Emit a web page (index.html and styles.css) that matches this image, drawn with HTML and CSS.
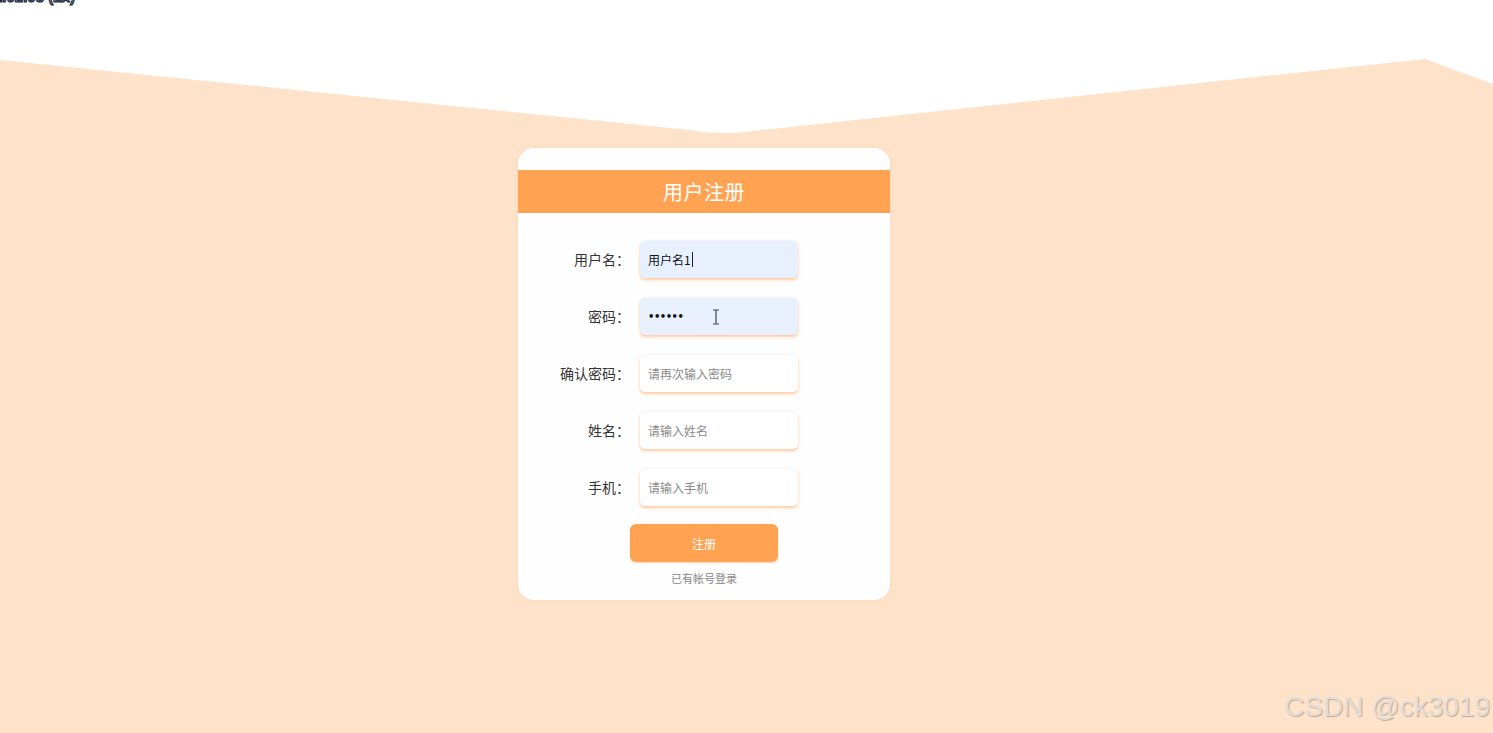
FILE: index.html
```html
<!DOCTYPE html>
<html lang="zh">
<head>
<meta charset="utf-8">
<title>用户注册</title>
<link rel="stylesheet" href="styles.css">
</head>
<body>
<svg class="bg" width="1493" height="733" viewBox="0 0 1493 733" aria-hidden="true">
  <path d="M0,60 L690,130 Q720,136 752,131 L1425,59 L1493,84 L1493,733 L0,733 Z" fill="#fee3ca"/>
</svg>
<span class="zoom-tag">1.02.03 (2x)</span>
<main class="page">
  <section class="card">
    <div class="card-top"></div>
    <h1 class="card-title">用户注册</h1>
    <form class="form">
      <div class="row">
        <label class="label">用户名：</label>
        <div class="field filled"><span class="value">用户名1</span><span class="caret"></span></div>
      </div>
      <div class="row">
        <label class="label">密码：</label>
        <div class="field filled"><span class="value dots">••••••</span>
          <svg class="ibeam" width="8" height="16" viewBox="0 0 8 16"><path d="M1,1 H7 M4,1 V15 M1,15 H7" stroke="#444" stroke-width="1.2" fill="none"/></svg>
        </div>
      </div>
      <div class="row">
        <label class="label">确认密码：</label>
        <div class="field"><span class="ph">请再次输入密码</span></div>
      </div>
      <div class="row">
        <label class="label">姓名：</label>
        <div class="field"><span class="ph">请输入姓名</span></div>
      </div>
      <div class="row">
        <label class="label">手机：</label>
        <div class="field"><span class="ph">请输入手机</span></div>
      </div>
      <div class="actions">
        <button type="button" class="btn">注册</button>
        <a class="login-link">已有帐号登录</a>
      </div>
    </form>
  </section>
</main>
<div class="watermark">CSDN @ck3019</div>
</body>
</html>
```

FILE: styles.css
```css
* { box-sizing: border-box; }
html, body { margin: 0; padding: 0; }
body {
  width: 1493px;
  height: 733px;
  overflow: hidden;
  background: #ffffff;
  font-family: "Noto Sans CJK SC", "Noto Sans", sans-serif;
  position: relative;
}
.bg { position: absolute; left: 0; top: 0; z-index: 0; }
.zoom-tag {
  position: absolute;
  left: -6px;
  top: -12px;
  font: bold 15px "Liberation Sans", sans-serif;
  color: #5b80d8;
  -webkit-text-stroke: 1px #222;
  z-index: 2;
}
.page {
  position: relative;
  z-index: 1;
  padding-top: 148px;
  padding-left: 518px;
}
.card {
  width: 372px;
  height: 452px;
  background: #fefefe;
  border-radius: 16px;
  overflow: hidden;
  box-shadow: 0 0 4px rgba(255, 200, 160, 0.4);
}
.card-top { height: 22px; }
.card-title {
  margin: 0;
  height: 43px;
  background: #ffa352;
  color: #fff;
  font-size: 20px;
  font-weight: 400;
  line-height: 43px;
  text-align: center;
  letter-spacing: 0.5px;
}
.form {
  display: flex;
  flex-direction: column;
  padding-top: 28px;
  gap: 21px;
}
.row {
  display: flex;
  align-items: center;
  height: 36px;
}
.label {
  width: 112px;
  text-align: right;
  font-size: 14px;
  color: #333;
  margin-right: 10px;
}
.field {
  width: 158px;
  height: 37px;
  border-radius: 5px;
  background: #fff;
  box-shadow: 0 2px 3px rgba(255, 160, 90, 0.55), 0 -1px 3px rgba(0, 0, 0, 0.04);
  display: flex;
  align-items: center;
  padding-left: 8px;
  position: relative;
}
.field.filled { background: #e8f0fe; }
.value { font-size: 12px; color: #111; }
.dots { font-size: 10px; letter-spacing: -0.5px; font-family: "DejaVu Sans", sans-serif; font-weight: bold; }
.caret {
  display: inline-block;
  width: 1px;
  height: 15px;
  background: #222;
  margin-left: 1px;
}
.ibeam { position: absolute; left: 72px; top: 11px; }
.ph { font-size: 12px; color: #8a8a8a; }
.actions {
  display: flex;
  flex-direction: column;
  align-items: flex-start;
  padding-left: 112px;
  margin-top: -2px;
}
.btn {
  width: 148px;
  height: 38px;
  border: none;
  border-radius: 6px;
  background: #ffa352;
  color: #fff;
  font-family: inherit;
  font-size: 12px;
  padding: 0;
  box-shadow: 0 1px 2px rgba(255, 150, 80, 0.4);
}
.login-link {
  width: 148px;
  text-align: center;
  margin-top: 8px;
  font-size: 11px;
  color: #888;
}
.watermark {
  position: absolute;
  right: 3px;
  bottom: 10px;
  z-index: 2;
  font: 28px "Liberation Sans", sans-serif;
  color: #e2ddd9;
  text-shadow: 1px 1px 1px rgba(120, 100, 90, 0.45);
}
```
